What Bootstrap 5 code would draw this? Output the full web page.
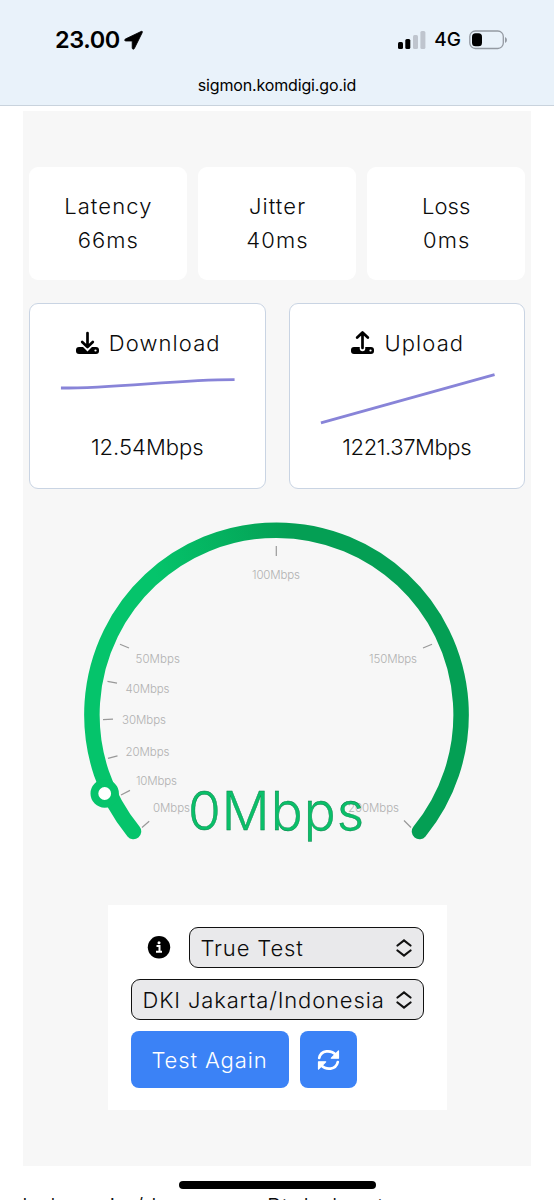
<!DOCTYPE html>
<html lang="id">
<head>
<meta charset="utf-8">
<meta name="viewport" content="width=device-width, initial-scale=1">
<title>Sigmon</title>
<link href="https://cdn.jsdelivr.net/npm/bootstrap@5.3.0/dist/css/bootstrap.min.css" rel="stylesheet">
<style>
html,body{height:1200px;overflow:hidden}
body{font:300 22px/34px Inter,"Liberation Sans",sans-serif;color:#0b0b0b;background:#fff}
.topbar{height:106px;background:#e9f2fa;border-bottom:1px solid #c9d3dd;color:#000}
.statusline{height:66px;padding:21px 46px 0 55px}
.clock{font-weight:600;font-size:23.5px;letter-spacing:-.4px}
.net{font-weight:500;font-size:19px;letter-spacing:0}
.address{font-size:16px;line-height:24px;font-weight:400;letter-spacing:-.15px;padding-top:7px}
.panel{margin:5px 23px 0;height:1055px;background:#f7f7f7;padding:56px 6px 0}
.stats{display:grid;grid-template-columns:repeat(3,1fr);gap:11.5px}
.stat{height:113px;border-radius:9px;background:#fff;padding-top:22px}
.spread{letter-spacing:1.1px;margin-right:-1.1px}
.snug{letter-spacing:-.4px}
.speeds{display:grid;grid-template-columns:1fr 1fr;gap:23px;margin-top:23px}
.speed{height:186px;border:1.3px solid #c9d4e3;border-radius:9px;background:#fff;padding-top:22px}
.trend{height:64px;margin-top:1px;width:100%}
.value{margin-top:5px}
.gauge{width:508px;height:380px;margin:12px -6px 0}
.gauge text{font-size:11.5px;fill:#b1b1b1}
.gauge .reading{font-size:53px;fill:#0abf69;stroke:#087d47;stroke-width:.4}
.controls{width:339px;height:205px;background:#fff;padding:22px 23px;margin:24px auto 0;gap:11px}
.controls>div{gap:11px}
.pick{height:41px;border:1.5px solid #111;border-radius:9px;background:#e9e9eb;color:#0b0b0b;padding:0 11px;font-size:22px;font-weight:300;letter-spacing:.85px}
.pick-mode{width:235px}
.info{margin-right:5px}
.go{height:57px;border-radius:8px;background:#3b82f6;color:#fff;border:0;padding:0;font-weight:300}
.go-wide{width:158px;letter-spacing:.9px}
.go-square{width:57px}
.homebar{left:179px;top:1181px;width:197px;height:8px;border-radius:4px;background:#000}
.footline{padding:23px 0 0 22px;height:34px;overflow:hidden;white-space:nowrap}
.foot-a{width:245px;letter-spacing:.8px}
.foot-b{letter-spacing:.9px}
</style>
</head>
<body>
<header class="topbar">
  <div class="statusline d-flex justify-content-between">
    <div class="d-flex align-items-center gap-1 h-50 pt-3"><span class="clock">23.00</span>
      <svg width="21" height="21" viewBox="0 0 21 21"><path d="M17 1.500 1.800 8.800C0 9.700 .4 11 2 11H8.200V17.800c0 1.700 1.600 2 2.300.4L18.200 2.700C18.700 1.500 18.200 1 17 1.500Z" stroke="#000" stroke-width=".8"/></svg></div>
    <div class="d-flex align-items-center h-50 pt-3">
      <svg width="28" height="20" viewBox="0 0 28 20"><rect x="0" y="12" width="5" height="7" rx="1.500"/><rect x="7.300" y="9" width="5" height="10" rx="1.500"/><rect x="15" y="5" width="5" height="14" rx="1.500" fill="#bfc5ce"/><rect x="22.400" y="1" width="5" height="18" rx="1.500" fill="#bfc5ce"/></svg>
      <span class="net ms-2 me-2">4G</span>
      <svg width="39" height="20" viewBox="0 0 39 20"><rect x=".8" y="1" width="33.500" height="17.500" rx="5.500" fill="none" stroke="#949aa2" stroke-width="1.300"/><rect x="3" y="3.300" width="10" height="13" rx="3.500"/><path d="M36 7v6q2-1 2-3t-2-3Z" fill="#949aa2"/></svg>
    </div>
  </div>
  <div class="address text-center">sigmon.komdigi.go.id</div>
</header>
<main class="panel">
  <section class="stats text-center">
    <div class="stat"><div class="spread">Latency</div><div class="spread">66ms</div></div>
    <div class="stat"><div class="spread">Jitter</div><div class="spread">40ms</div></div>
    <div class="stat"><div>Loss</div><div class="spread">0ms</div></div>
  </section>
  <section class="speeds text-center">
    <div class="speed">
      <div class="d-flex justify-content-center align-items-center"><svg class="me-2" width="26" height="24" viewBox="0 0 26 24"><rect x="1" y="16" width="23" height="7" rx="3"/><path d="m7 11 5.500 5.500L18 11" fill="none" stroke="#fff" stroke-width="5.500"/><path d="M12.500 2v13.500M7.200 11l5.300 5 5.300-5" fill="none" stroke="#000" stroke-width="2.700" stroke-linecap="round" stroke-linejoin="round"/><circle cx="20.500" cy="19.500" r="1.100" fill="#fff"/></svg><span class="spread">Download</span></div>
      <svg class="trend d-block" viewBox="0 0 235 64"><path d="M31 27C91 27 145 18.500 205 18.500" fill="none" stroke="#8884d8" stroke-width="2.800"/></svg>
      <div class="value">12.54Mbps</div>
    </div>
    <div class="speed">
      <div class="d-flex justify-content-center align-items-center"><svg class="me-2" width="26" height="24" viewBox="0 0 26 24"><rect x="1" y="16" width="23" height="7" rx="3"/><path d="M12.500 15v2.500" stroke="#fff" stroke-width="5.500" stroke-linecap="round"/><path d="M12.500 17V2M7.200 6.500l5.300-5 5.300 5" fill="none" stroke="#000" stroke-width="2.700" stroke-linecap="round" stroke-linejoin="round"/><circle cx="20.500" cy="19.500" r="1.100" fill="#fff"/></svg><span class="spread">Upload</span></div>
      <svg class="trend d-block" viewBox="0 0 235 64"><path d="M31 62 205 13.500" fill="none" stroke="#8884d8" stroke-width="2.800"/></svg>
      <div class="value snug">1221.37Mbps</div>
    </div>
  </section>
  <svg class="gauge d-block" viewBox="23 501 508 380">
    <defs><linearGradient id="arc" gradientUnits="userSpaceOnUse" x1="165" y1="600" x2="300" y2="550"><stop stop-color="#05c46b"/><stop offset="1" stop-color="#049f54"/></linearGradient></defs>
    <path d="M133.500 831.500A184.600 184.600 0 1 1 419.500 831.500" fill="none" stroke="url(#arc)" stroke-width="15.500" stroke-linecap="round"/>
    <circle cx="104.700" cy="793.500" r="10.300" fill="#fff" stroke="#05c46b" stroke-width="7.800"/>
    <path d="M276.300 546v10M120 644.300l9 3.700M107.500 681.300l9.500 1.900M103 719.600l10-.4M108 758.300l9.500-2.500M121 795l9-4.600M142 827.500l7.200-6.200M423 648l9-3.700M404 820.500l7 7" stroke="#999" stroke-width="1.200"/>
    <text x="252" y="579" textLength="48">100Mbps</text>
    <text x="135.500" y="663" textLength="44.500">50Mbps</text>
    <text x="125.500" y="692.500" textLength="44">40Mbps</text>
    <text x="122" y="724" textLength="44">30Mbps</text>
    <text x="125.500" y="755.500" textLength="44">20Mbps</text>
    <text x="136" y="785" textLength="41">10Mbps</text>
    <text x="153" y="811.500" textLength="37">0Mbps</text>
    <text x="369" y="663" textLength="48">150Mbps</text>
    <text x="348" y="811.500" textLength="51">200Mbps</text>
    <text class="reading" x="188" y="830" textLength="176">0Mbps</text>
  </svg>
  <section class="controls d-flex flex-column">
    <div class="d-flex align-items-center justify-content-end">
      <svg class="info" width="26" height="24" viewBox="0 0 26 24"><circle cx="12" cy="11.300" r="11.200"/><path d="M9.500 10h3v5.600M9 15.800h6" fill="none" stroke="#fff" stroke-width="2"/><circle cx="12" cy="6.800" r="1.500" fill="#fff"/></svg>
      <button class="pick pick-mode d-flex align-items-center justify-content-between" type="button"><span>True Test</span><svg width="16" height="18" viewBox="0 0 16 18"><path d="m1.500 6.500 6.500-5 6.500 5M1.500 11.500l6.500 5 6.500-5" fill="none" stroke="#111" stroke-width="2.200" stroke-linecap="round"/></svg></button>
    </div>
    <button class="pick w-100 d-flex align-items-center justify-content-between" type="button"><span>DKI Jakarta/Indonesia</span><svg width="16" height="18" viewBox="0 0 16 18"><path d="m1.500 6.500 6.500-5 6.500 5M1.500 11.500l6.500 5 6.500-5" fill="none" stroke="#111" stroke-width="2.200" stroke-linecap="round"/></svg></button>
    <div class="d-flex">
      <button class="go go-wide" type="button">Test Again</button>
      <button class="go go-square d-flex align-items-center justify-content-center" type="button" aria-label="refresh"><svg width="23" height="22" viewBox="0 0 23 22"><path d="M2.200 9C4 1 14 .5 19 6M20.800 13C19 21 9 21.500 4 16" fill="none" stroke="#fff" stroke-width="2.700" stroke-linecap="round"/><path d="M21.500 2v7.200h-7.200ZM1.500 20v-7.200h7.200Z" fill="#fff" stroke="#fff" stroke-width="1.200" stroke-linejoin="round"/></svg></button>
    </div>
  </section>
</main>
<footer class="footline d-flex"><span class="foot-a">Indonesia / Lampung</span><span class="foot-b">Pt. Indosat</span></footer>
<div class="homebar position-absolute"></div>
<script src="https://cdn.jsdelivr.net/npm/bootstrap@5.3.0/dist/js/bootstrap.bundle.min.js"></script>
</body>
</html>
